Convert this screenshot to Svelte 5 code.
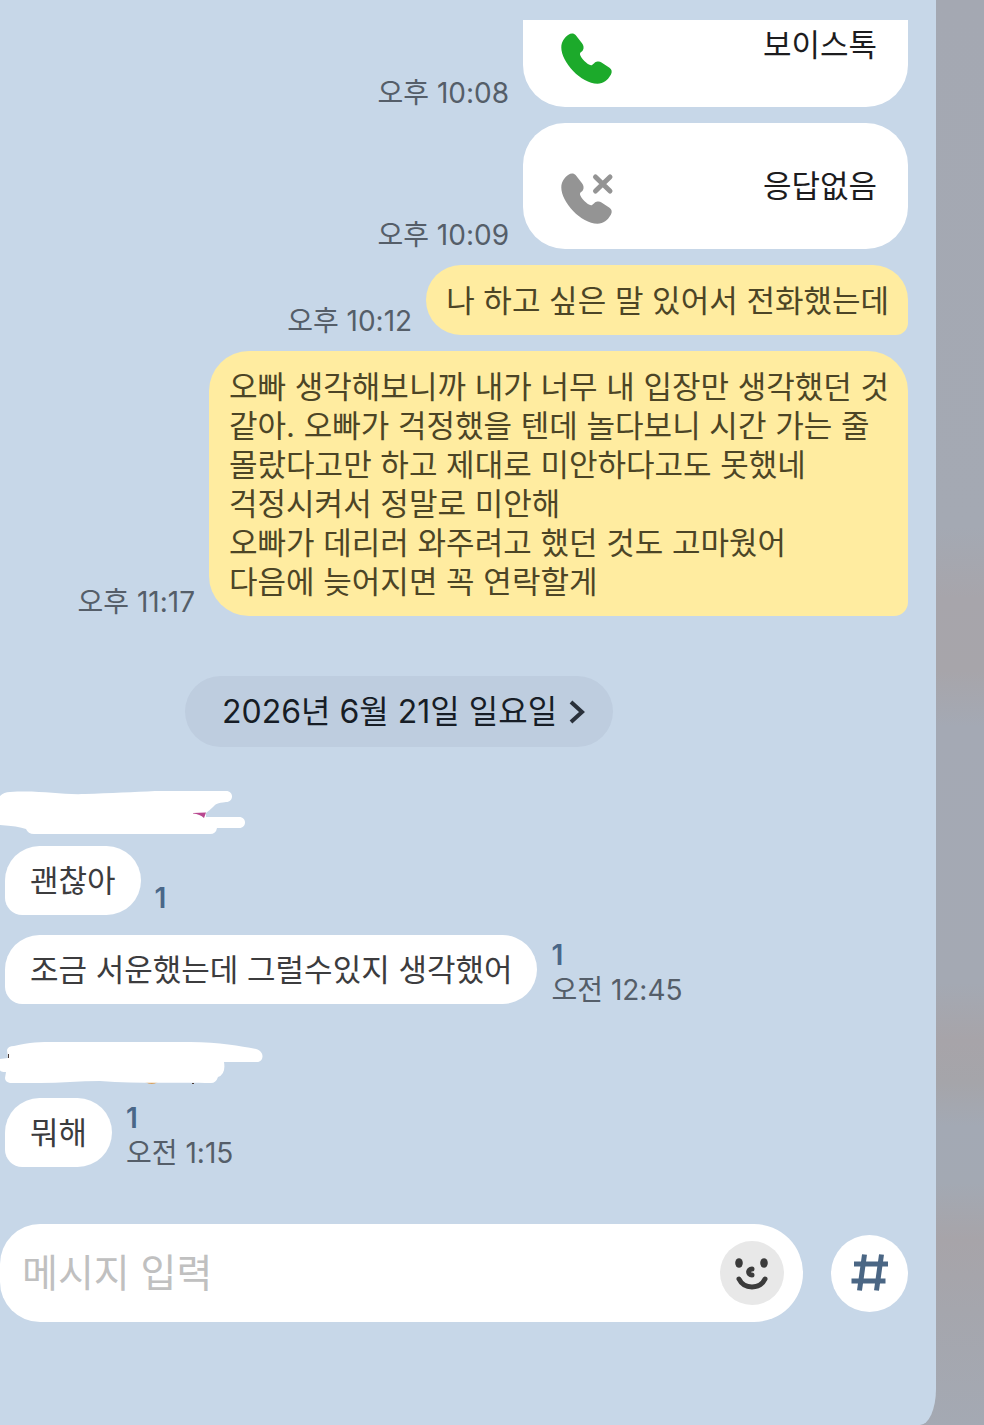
<script lang="ts">
  const calls = [
    { label: '보이스톡', time: '오후 10:08', missed: false },
    { label: '응답없음', time: '오후 10:09', missed: true }
  ];

  const sent = [
    { time: '오후 10:12', lines: ['나 하고 싶은 말 있어서 전화했는데'] },
    {
      time: '오후 11:17',
      lines: [
        '오빠 생각해보니까 내가 너무 내 입장만 생각했던 것',
        '같아. 오빠가 걱정했을 텐데 놀다보니 시간 가는 줄',
        '몰랐다고만 하고 제대로 미안하다고도 못했네',
        '걱정시켜서 정말로 미안해',
        '오빠가 데리러 와주려고 했던 것도 고마웠어',
        '다음에 늦어지면 꼭 연락할게'
      ]
    }
  ];

  const received = [
    {
      cover: 'first',
      messages: [
        { text: '괜찮아', time: '' },
        { text: '조금 서운했는데 그럴수있지 생각했어', time: '오전 12:45' }
      ]
    },
    { cover: 'second', messages: [{ text: '뭐해', time: '오전 1:15' }] }
  ];

  let draft = $state('');
</script>

<div class="screen">
  <main class="chat">
    <section class="sent">
      {#each calls as call}
        <div class="row">
          <time>{call.time}</time>
          <div class="call" class:clipped={!call.missed}>
            <svg class="phone" class:missed={call.missed} viewBox="0 0 54 52" aria-hidden="true">
              <path
                d="M7.500 1.800C10 0 13 .2 14.800 2.200L21 10.200C22.800 12.500 23 15 22 17C21 19 18.800 19 19 21.500C19.500 24.500 26.500 32 30 32.300C32 32.400 33 29.500 35.500 28.800C37.500 28 39 28.500 40.500 29.500L48.500 34.800C51 36.500 51.200 39 50 41.500C46.500 47.500 42.500 50.700 36.500 50.700C20 50.700 .3 29 .3 14.500C.3 9 3.500 4.500 7.500 1.800Z"
              />
              {#if call.missed}
                <path class="cross" d="M34.500 4L49 18M49 4L34.500 18" />
              {/if}
            </svg>
            <span>{call.label}</span>
          </div>
        </div>
      {/each}
      {#each sent as message}
        <div class="row">
          <time>{message.time}</time>
          <p class="bubble mine">
            {#each message.lines as line}
              <span>{line}</span>
            {/each}
          </p>
        </div>
      {/each}
    </section>

    <button class="date" type="button">
      2026년 6월 21일 일요일
      <svg viewBox="0 0 16 24" aria-hidden="true"><path d="M2 2L13 12L2 22" /></svg>
    </button>

    {#each received as group}
      <section class="received">
        {#if group.cover === 'first'}
          <svg class="cover" viewBox="0 0 264 48" aria-hidden="true">
            <path
              d="M0 7Q4 3 10 3C40 1 60 6 85 5C110 4 135 3 155 2H226C234 2 234 13 226 13C217 14 216 15 213 18Q210 21 206 24V28H239C247 28 247 39 239 39H217Q216 45 210 45H34Q28 45 26 40Q18 37 0 36Z"
            />
            <path class="pink" d="M193 24L206 23.500L204 29Q200 25 193 24.500Z" />
          </svg>
        {:else}
          <svg class="cover" viewBox="0 0 264 48" aria-hidden="true">
            <path class="orange" d="M145 41Q152 45 158 41Z" />
            <path
              d="M14 5C30 1 40 1 55 1H190C220 1 240 5 256 8C265 10 264 21 257 21H224Q226 33 218 36Q216 42 211 42C180 41 140 43 100 40C80 40 60 42 40 42H10Q5 41 5 37L6 31Q0 31 0 29V18L8 17L7 9Q8 5 14 5Z"
            />
            <path class="dot" d="M8 13h1v4h-1zM192 42h2v1h-2z" />
          </svg>
        {/if}
        {#each group.messages as message}
          <div class="row">
            <p class="bubble">{message.text}</p>
            <div class="meta" class:unread-only={!message.time}>
              <span class="unread">1</span>
              {#if message.time}
                <time>{message.time}</time>
              {/if}
            </div>
          </div>
        {/each}
      </section>
    {/each}

    <form class="composer" onsubmit={(e) => e.preventDefault()}>
      <div class="field">
        <input type="text" placeholder="메시지 입력" aria-label="메시지 입력" bind:value={draft} />
        <button class="emoji" type="button" aria-label="이모티콘">
          <svg viewBox="0 0 64 64" aria-hidden="true">
            <ellipse cx="19" cy="22" rx="3.800" ry="4.800" />
            <ellipse cx="44" cy="22" rx="3.800" ry="4.800" />
            <path d="M32 28C27.500 28 27.500 34 32 34" />
            <path d="M19 38C24 48.500 40 48.500 45 38" />
          </svg>
        </button>
      </div>
      <button class="hash" type="button" aria-label="샵 검색">
        <svg viewBox="0 0 40 40" aria-hidden="true">
          <path d="M14.500 1.500L9.500 37.500M31.500 1.500L26.500 37.500M4 11H38M1.500 28H35.500" />
        </svg>
      </button>
    </form>
  </main>
</div>

<style>
  :global(body) {
    margin: 0;
  }

  .screen {
    min-height: 100vh;
    box-sizing: border-box;
    padding-right: 48px;
    display: flex;
    background: linear-gradient(
      to bottom,
      #a4a8b2 0%,
      #a4a9b3 37%,
      #a7a5ab 42%,
      #a7a5aa 47%,
      #a4a9b4 51%,
      #a4a9b3 69%,
      #a7a4a9 73%,
      #a5a5aa 76%,
      #a3a9b4 79%,
      #a3a9b3 83%,
      #a7a4a9 87%,
      #a5a6ad 92%,
      #a4a9b3 100%
    );
    font-family: Inter, 'Noto Sans CJK KR', sans-serif;
    font-size: 31px;
    line-height: 39px;
    color: #3c3c3e;
  }

  .chat {
    flex: 1;
    min-width: 0;
    display: flex;
    flex-direction: column;
    padding-top: 20px;
    background: #c7d7e8;
    border-bottom-right-radius: 16px 36px;
  }

  .row {
    display: flex;
    align-items: flex-end;
    gap: 14px;
  }

  time {
    flex: none;
    font-size: 28px;
    line-height: 28px;
    color: #555e69;
  }

  .sent {
    display: flex;
    flex-direction: column;
    gap: 16px;
    padding-right: 28px;
  }

  .sent .row {
    justify-content: flex-end;
  }

  .call {
    box-sizing: border-box;
    width: 385px;
    height: 126px;
    padding: 0 31px 2px 38px;
    display: flex;
    align-items: center;
    justify-content: space-between;
    background: #fff;
    border-radius: 42px;
    color: #1c1c1e;
  }

  .call.clipped {
    height: 87px;
    padding-bottom: 38px;
    border-radius: 0 0 42px 42px;
  }

  .phone {
    width: 54px;
    height: 52px;
    margin-top: 28px;
    fill: #1caa2b;
  }

  .phone.missed {
    fill: #949494;
  }

  .cross {
    fill: none;
    stroke: #949494;
    stroke-width: 5;
    stroke-linecap: round;
  }

  .bubble {
    margin: 0;
    padding: 15px 25px;
    background: #fff;
    border-radius: 36px 36px 36px 18px;
  }

  .bubble.mine {
    padding: 16px 19px 15px 20px;
    background: #ffeca0;
    border-radius: 40px 40px 14px 40px;
    color: #4c4526;
  }

  .bubble.mine span {
    display: block;
  }

  .date {
    align-self: flex-start;
    display: flex;
    align-items: center;
    gap: 12px;
    margin: 60px 0 42px 185px;
    padding: 16px 28px 16px 37px;
    border: none;
    border-radius: 36px;
    background: #becddf;
    font: inherit;
    font-size: 32px;
    color: #171d26;
  }

  .date svg {
    width: 16px;
    height: 24px;
    fill: none;
    stroke: #2a313b;
    stroke-width: 4;
  }

  .received {
    display: flex;
    flex-direction: column;
    align-items: flex-start;
    margin-bottom: 37px;
  }

  .received .row {
    padding-left: 5px;
  }

  .received .row + .row {
    margin-top: 20px;
  }

  .cover {
    width: 264px;
    height: 48px;
    margin-bottom: 9px;
    fill: #fff;
  }

  .pink {
    fill: #b8478f;
  }

  .orange {
    fill: #d9a05b;
  }

  .dot {
    fill: #4a3a34;
  }

  .meta {
    display: flex;
    flex-direction: column;
    gap: 7px;
  }

  .meta.unread-only {
    padding-bottom: 3px;
  }

  .unread {
    font-size: 28px;
    line-height: 28px;
    font-weight: 600;
    color: #4a6788;
  }

  .composer {
    display: flex;
    align-items: center;
    gap: 28px;
    margin: 20px 28px 102px 0;
  }

  .field {
    flex: 1;
    min-width: 0;
    height: 98px;
    box-sizing: border-box;
    display: flex;
    align-items: center;
    padding: 0 19px 0 22px;
    background: #fff;
    border-radius: 40px 49px 49px 40px;
  }

  input {
    flex: 1;
    min-width: 0;
    padding: 0;
    border: none;
    outline: none;
    background: transparent;
    font: inherit;
    font-size: 39px;
    line-height: 48px;
    color: #3c3c3e;
  }

  input::placeholder {
    color: #c0c0c0;
    opacity: 1;
  }

  .emoji,
  .hash {
    flex: none;
    display: grid;
    place-items: center;
    padding: 0;
    border: none;
    border-radius: 50%;
  }

  .emoji {
    width: 64px;
    height: 64px;
    background: #e8e8e8;
  }

  .emoji svg {
    width: 64px;
    height: 64px;
    fill: #3b3b3b;
  }

  .emoji path {
    fill: none;
    stroke: #3b3b3b;
    stroke-width: 5;
    stroke-linecap: round;
  }

  .hash {
    width: 77px;
    height: 77px;
    background: #fff;
  }

  .hash svg {
    width: 40px;
    height: 40px;
    fill: none;
    stroke: #4a6684;
    stroke-width: 5;
  }
</style>
